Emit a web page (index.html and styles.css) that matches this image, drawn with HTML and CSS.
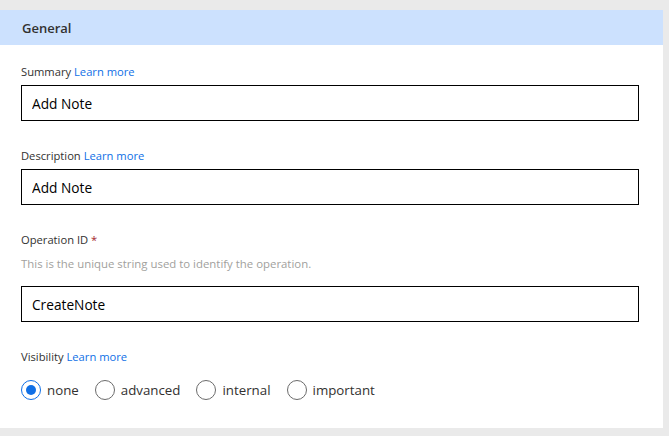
FILE: index.html
```html
<!DOCTYPE html>
<html lang="en">
<head>
    <meta charset="UTF-8">
    <meta name="viewport" content="width=device-width, initial-scale=1.0">
    <title>General</title>
    <link rel="stylesheet" href="styles.css">
</head>
<body>
    <div class="panel">
        <div class="panel-header">General</div>

        <div class="panel-body">
            <div class="field">
                <label for="summary">Summary <a href="#">Learn more</a></label>
                <input type="text" id="summary" value="Add Note">
            </div>

            <div class="field">
                <label for="description">Description <a href="#">Learn more</a></label>
                <input type="text" id="description" value="Add Note">
            </div>

            <div class="field">
                <label for="operationId">Operation ID <span class="required">*</span></label>
                <p class="hint">This is the unique string used to identify the operation.</p>
                <input type="text" id="operationId" value="CreateNote">
            </div>

            <div class="field">
                <label>Visibility <a href="#">Learn more</a></label>
                <div class="radio-group">
                    <label class="radio"><input type="radio" name="visibility" checked><span class="dot"></span>none</label>
                    <label class="radio"><input type="radio" name="visibility"><span class="dot"></span>advanced</label>
                    <label class="radio"><input type="radio" name="visibility"><span class="dot"></span>internal</label>
                    <label class="radio"><input type="radio" name="visibility"><span class="dot"></span>important</label>
                </div>
            </div>
        </div>
    </div>
</body>
</html>
```

FILE: styles.css
```css
body {
    font-family: "Open Sans", sans-serif;
    background-color: #eaeaea;
    margin: 0;
    padding: 10px 0 0;
    color: #323130;
}

.panel {
    width: 663px;
    height: 418px;
    background: #ffffff;
}

.panel-header {
    height: 35px;
    line-height: 36px;
    padding-left: 22px;
    background: #cce1fe;
    font-size: 13px;
    font-weight: 600;
    color: #323130;
}

.panel-body {
    padding: 19px 24px 0 21px;
}

.field {
    margin-bottom: 27px;
}

.field > label {
    display: block;
    font-size: 11.2px;
    line-height: 16px;
    margin-bottom: 5px;
}

a {
    color: #0f6fe6;
    text-decoration: none;
}

.required {
    color: #a4262c;
}

.hint {
    margin: 8px 0 14px;
    font-size: 11.4px;
    line-height: 16px;
    color: #a19f9d;
}

input[type="text"] {
    display: block;
    box-sizing: border-box;
    width: 100%;
    height: 36px;
    padding: 0 10px;
    border: 1px solid #000000;
    border-radius: 0;
    font-family: inherit;
    font-size: 13.7px;
    color: #000000;
    background: #ffffff;
}

.field > label + .radio-group {
    margin-top: 15px;
}

.radio-group {
    display: flex;
    align-items: center;
}

.radio {
    display: flex;
    align-items: center;
    margin-right: 16px;
    font-size: 13.3px;
    line-height: 20px;
    color: #323130;
    cursor: pointer;
}

.radio input {
    display: none;
}

.dot {
    box-sizing: border-box;
    width: 20px;
    height: 20px;
    margin-right: 6px;
    border: 1px solid #6b6b6b;
    border-radius: 50%;
    position: relative;
}

.radio input:checked + .dot {
    border-color: #0f6fe6;
}

.radio input:checked + .dot::after {
    content: "";
    position: absolute;
    top: 4px;
    left: 4px;
    width: 10px;
    height: 10px;
    border-radius: 50%;
    background: #0f6fe6;
}
```
